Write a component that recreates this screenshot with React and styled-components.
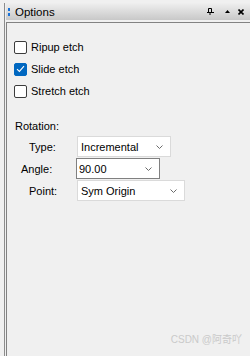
import React from "react";
import styled, { createGlobalStyle } from "styled-components";

const GlobalStyle = createGlobalStyle`
  html, body {
    margin: 0;
    padding: 0;
    background: #f0f0f0;
  }
  body {
    font-family: "Liberation Sans", Arial, sans-serif;
    font-size: 11px;
    color: #000;
  }
`;

const Window = styled.div`
  position: relative;
  width: 250px;
  height: 356px;
  padding: 3px 0 0 4px;
  box-sizing: border-box;
  background: #f0f0f0;
  overflow: hidden;
`;

const Dock = styled.div`
  height: 100%;
  border-left: 1px solid #8c8c8c;
  padding-left: 1px;
  display: flex;
  flex-direction: column;
`;

const TitleBar = styled.div`
  height: 17px;
  display: flex;
  align-items: center;
  background: linear-gradient(#efefef, #c8c8c8);
  padding: 0 6px 0 2px;
`;

const Grip = styled.span`
  display: flex;
  flex-direction: column;
  gap: 2px;
  width: 2px;
  margin-right: 5px;

  i {
    display: block;
    width: 2px;
    height: 3px;
    background: #1a73d9;
  }
`;

const Title = styled.span`
  flex: 1;
  font-size: 11.5px;
`;

const TitleIcons = styled.div`
  display: flex;
  align-items: center;
  gap: 8px;

  svg {
    display: block;
  }
`;

const Content = styled.div`
  flex: 1;
  margin-top: 2px;
  border-top: 1px solid #828282;
  border-left: 1px solid #828282;
  padding: 13px 0 0 7px;
`;

const CheckRow = styled.label`
  height: 22px;
  display: flex;
  align-items: center;
  gap: 4px;
  font-size: 11px;
`;

const Box = styled.span`
  width: 11px;
  height: 11px;
  border-radius: 2px;
  border: 1px solid ${(p) => (p.$checked ? "#0067c0" : "#3c3c3c")};
  background: ${(p) => (p.$checked ? "#0067c0" : "#fff")};
  display: flex;
  align-items: center;
  justify-content: center;
`;

const SectionLabel = styled.div`
  margin-top: 17px;
  line-height: 14px;
  padding-left: 1px;
`;

const FieldList = styled.div`
  margin-top: 3px;
  display: flex;
  flex-direction: column;
  gap: 1px;
`;

const FieldRow = styled.div`
  display: flex;
  align-items: center;
  height: 21px;
`;

const FieldLabel = styled.span`
  width: ${(p) => p.$width}px;
  padding-left: ${(p) => p.$indent}px;
  box-sizing: border-box;
`;

const Select = styled.div`
  width: ${(p) => p.$width}px;
  height: 21px;
  box-sizing: border-box;
  background: #fff;
  border: 1px solid ${(p) => (p.$focused ? "#808080" : "#dadada")};
  display: flex;
  align-items: center;
  justify-content: space-between;
  padding: 0 7px 0 ${(p) => (p.$focused ? 2 : 3)}px;
`;

const Watermark = styled.div`
  position: absolute;
  right: 8px;
  bottom: 10px;
  font-size: 10px;
  color: #cacaca;
  font-family: "Liberation Sans", "Noto Sans CJK SC", sans-serif;
`;

const Chevron = () => (
  <svg width="7" height="4" viewBox="0 0 7 4">
    <path d="M0.5 0.5 L3.5 3.5 L6.5 0.5" fill="none" stroke="#6b6b6b" strokeWidth="1" />
  </svg>
);

const Check = () => (
  <svg width="9" height="8" viewBox="0 0 9 8">
    <path d="M1 4.2 L3.4 6.4 L8 1.2" fill="none" stroke="#fff" strokeWidth="1.1" />
  </svg>
);

function CheckBox({ checked, children }) {
  return (
    <CheckRow>
      <Box $checked={checked}>{checked && <Check />}</Box>
      {children}
    </CheckRow>
  );
}

const fields = [
  { label: "Type:", indent: 15, labelWidth: 63, value: "Incremental", width: 94 },
  { label: "Angle:", indent: 7, labelWidth: 62, value: "90.00", width: 84, focused: true },
  { label: "Point:", indent: 15, labelWidth: 63, value: "Sym Origin", width: 108 },
];

export default function App() {
  return (
    <Window>
      <GlobalStyle />
      <Dock>
        <TitleBar>
          <Grip>
            <i />
            <i />
          </Grip>
          <Title>Options</Title>
          <TitleIcons>
            <svg width="7" height="7" viewBox="0 0 7 7">
              <path d="M1.5 0.5 H4.5 V4 M1.5 0.5 V4 M0 4.5 H7 M3 4.5 V7" fill="none" stroke="#000" strokeWidth="1" />
            </svg>
            <svg width="5" height="3" viewBox="0 0 5 3" style={{ marginLeft: 3 }}>
              <path d="M0 3 L2.5 0 L5 3 Z" fill="#000" />
            </svg>
            <svg width="6" height="6" viewBox="0 0 6 6">
              <path d="M0.5 0.5 L5.5 5.5 M5.5 0.5 L0.5 5.5" stroke="#000" strokeWidth="1.6" />
            </svg>
          </TitleIcons>
        </TitleBar>
        <Content>
          <CheckBox>Ripup etch</CheckBox>
          <CheckBox checked>Slide etch</CheckBox>
          <CheckBox>Stretch etch</CheckBox>

          <SectionLabel>Rotation:</SectionLabel>
          <FieldList>
            {fields.map((f) => (
              <FieldRow key={f.label}>
                <FieldLabel $width={f.labelWidth} $indent={f.indent}>
                  {f.label}
                </FieldLabel>
                <Select $width={f.width} $focused={f.focused}>
                  <span>{f.value}</span>
                  <Chevron />
                </Select>
              </FieldRow>
            ))}
          </FieldList>
        </Content>
      </Dock>
      <Watermark>CSDN @阿奇吖</Watermark>
    </Window>
  );
}
